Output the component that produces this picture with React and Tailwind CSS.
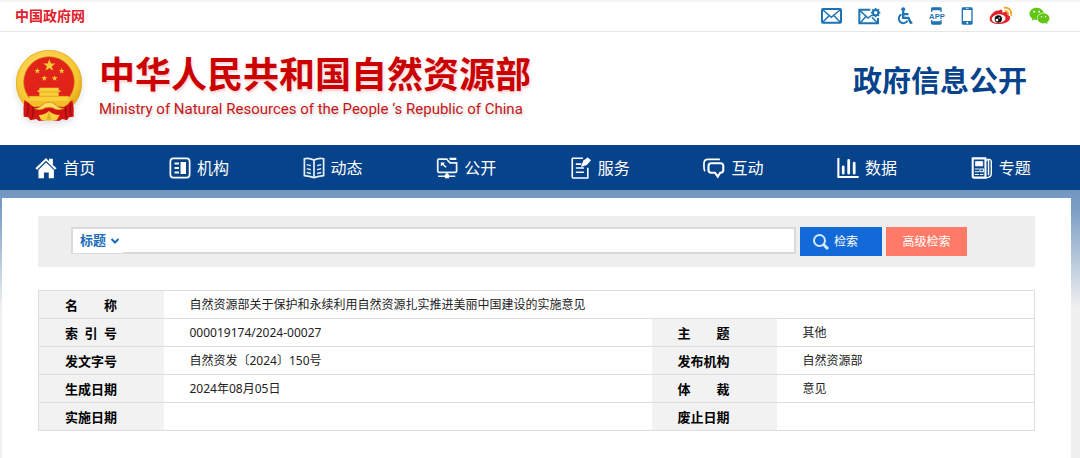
import { FaWeixin } from "react-icons/fa";

function Emblem() {
  return (
    <svg viewBox="45 147 216 228" className="mb-1 h-[76px] w-[72px] shrink-0 drop-shadow-md" role="img" aria-label="国徽">
      <defs>
        <radialGradient id="gold" cx="42%" cy="35%" r="70%">
          <stop offset="0" stopColor="#ffe070" />
          <stop offset="0.75" stopColor="#f6c32c" />
          <stop offset="1" stopColor="#d99a12" />
        </radialGradient>
      </defs>
      <circle cx="147" cy="249" r="99" fill="url(#gold)" />
      <circle cx="147" cy="249" r="98" fill="none" stroke="#dba51f" strokeWidth="2" />
      <circle cx="147" cy="246" r="76" fill="#e2231a" stroke="#c98a12" strokeWidth="2" />
      <path d="M73 300q-4 24-2 50l14 2 6 9 18-4 8 6 30-4 30 4 10-6 14 4 6-9 14-2q2-28-4-50l-22 16-48 8-50-8z" fill="#d21414" />
      <path d="M83 310q4 20-2 36M98 320q4 18-2 34M212 310q-4 20 2 36M198 320q-4 18 2 34" stroke="#9d0c0c" strokeWidth="4" fill="none" />
      <path d="M88 303v-15h30v-12h-5v-5h5v-8h58v8h5v5h-5v12h30v15z" fill="#f9cf3a" />
      <path d="M118 276h58M89 289h116" stroke="#d99a12" strokeWidth="2" />
      <path d="M84 303h127q-8 14-20 18l-21-2q-6-11-23-11t-23 11l-22 2q-12-6-18-18z" fill="#f2bd28" />
      <path d="M104 326q17-2 24-12 9-7 19-7t19 7q8 10 25 12-14 6-26 1-8-6-18-6t-18 6q-11 5-25-1z" fill="#ffdf62" stroke="#cf9113" strokeWidth="2" />
      <path d="M116 345q18 0 31-12 13 12 32 12l-8 14-24 3-24-3z" fill="#f9cf3a" />
      <path d="M147 333l-8 28h16z" fill="#cf9113" opacity=".5" />
      <g fill="#f2cf35">
        <path id="star" d="M148 177l4.500 13.500h14l-11.300 8.500 4.300 13.500-11.500-8.300-11.500 8.300 4.300-13.500-11.300-8.500h14z" />
        <use href="#star" transform="translate(112 213) scale(.48) translate(-148 -197)" />
        <use href="#star" transform="translate(185 213) scale(.48) translate(-148 -197)" />
        <use href="#star" transform="translate(133 235) scale(.48) translate(-148 -197)" />
        <use href="#star" transform="translate(164 235) scale(.48) translate(-148 -197)" />
      </g>
    </svg>
  );
}

const MailIcon = () => (
  <svg viewBox="61 25 63 48" className="h-4 w-[21px]" fill="none" stroke="#1e73b4" strokeWidth="6">
    <rect x="64" y="28" width="57" height="41" rx="3" />
    <path d="M67 31l25 22 26-22M67 67l18-19M118 67l-18-19" strokeWidth="4.500" />
  </svg>
);

const MailGearIcon = () => (
  <svg viewBox="172 20 69 54" className="h-[18px] w-[23px]" fill="none" stroke="#1e73b4" strokeWidth="6">
    <path d="M209 28h-33v41h56V53" />
    <path d="M178 31l24 22 12-9M179 67l16-18M230 67l-16-16" strokeWidth="4.500" />
    <circle cx="225" cy="37" r="8" strokeWidth="6" />
    <path d="M225 23v6M225 45v6M211 37h6M233 37h6M215 27l5 5M230 42l5 5M235 27l-5 5M220 42l-5 5" strokeWidth="5" />
  </svg>
);

const WheelchairIcon = () => (
  <svg viewBox="286 19 49 54" className="h-[18px] w-4" fill="none" stroke="#1e73b4" strokeWidth="5">
    <circle cx="305" cy="25" r="6" fill="#1e73b4" stroke="none" />
    <path d="M305 31v21h16l7 15 5-2M305 40h16" strokeWidth="7" />
    <path d="M300 41a14 14 0 1 0 18 19" strokeWidth="6" />
  </svg>
);

const AppIcon = () => (
  <svg viewBox="386 19 48 54" className="h-[18px] w-4" fill="#1e73b4">
    <path d="M392 34V24q0-4 4-4h24q4 0 4 4v10h-4v-5h-24v5zM392 58v10q0 4 4 4h24q4 0 4-4V58h-4v4h-24v-4z" />
    <text x="410" y="54" textAnchor="middle" fontSize="23" fontWeight="700" fontFamily="Liberation Sans, sans-serif">APP</text>
  </svg>
);

const PhoneIcon = () => (
  <svg viewBox="484 19 36 54" className="h-[18px] w-3">
    <rect x="486" y="20" width="33" height="52" rx="4" fill="#1e73b4" />
    <path d="M490 28h25v33h-25z" fill="#fff" />
    <path d="M498 24h9" stroke="#fff" strokeWidth="2" />
    <circle cx="503" cy="66" r="3" fill="#fff" />
  </svg>
);

const WeiboIcon = () => (
  <svg viewBox="568 18 72 57" className="h-[19px] w-6">
    <path d="M596 32c8-5 14-3 12 6 9-4 18-2 16 7 8 2 9 9 5 15-11 16-59 17-59-3 0-11 16-27 26-25z" fill="#e51f28" />
    <ellipse cx="597" cy="56" rx="21" ry="13" fill="#fff" transform="rotate(-7 597 56)" />
    <circle cx="596" cy="57" r="11" fill="#151515" />
    <circle cx="592" cy="60" r="4" fill="#fff" />
    <circle cx="599" cy="54" r="2" fill="#fff" />
    <path d="M613 23q23-2 22 24M615 33q11-1 11 11" fill="none" stroke="#f7a11b" strokeWidth="5" />
  </svg>
);

const navIconClass = "h-[22px] w-[22px] shrink-0";

const HomeIcon = () => (
  <svg viewBox="106 48 64 64" className={navIconClass} fill="#fff">
    <path d="M107 81l31-30 9 9v-7h11v18l11 10-5 4-26-26-26 26z" />
    <path d="M116 86l22-22 23 22v24h-15V93h-14v17h-16z" />
  </svg>
);

const OrgIcon = () => (
  <svg viewBox="508 49 64 64" className={navIconClass} fill="none" stroke="#fff" strokeWidth="5">
    <rect x="512" y="53" width="56" height="56" rx="9" />
    <path d="M524 68h13M524 81h13M524 94h13" strokeWidth="6" />
    <path d="M544 66h11v30h-11z" fill="#fff" />
  </svg>
);

const BookIcon = () => (
  <svg viewBox="99 49 64 64" className={navIconClass} fill="none" stroke="#e4eef9" strokeWidth="5">
    <path d="M131 58q-14-7-28-4v49q15 1 28 6 14-5 28-6V54q-15-3-28 4zM131 58v50" />
    <path d="M110 71l12 3M110 83l12 3M110 94l12 3M140 74l12-3M140 86l12-3M140 97l12-3" strokeWidth="4" />
  </svg>
);

const ScreenIcon = () => (
  <svg viewBox="499 49 64 64" className={navIconClass} fill="none" stroke="#eef4fb" strokeWidth="5">
    <path d="M536 62l-6-7h-22q-4 0-4 4v31q0 4 4 4h47q4 0 4-4V66h-19z" />
    <path d="M537 51h21v7h-18z" fill="#fff" stroke="none" />
    <path d="M513 65h12l-4 4 9 8-3 3-9-8-5 4z" fill="#fff" stroke="none" />
    <path d="M531 94v7M505 105h50" />
    <rect x="525" y="99" width="12" height="12" fill="#fff" stroke="none" />
  </svg>
);

const ServiceIcon = () => (
  <svg viewBox="88 49 64 68" className={navIconClass} fill="none" stroke="#fff" strokeWidth="5">
    <path d="M126 53H94q-1 0-1 2v56q0 3 3 3h45V82" />
    <path d="M104 71h17M104 83h25M104 96h25" />
    <path d="M120 80l7-20 10-6 3-4 11 9-4 5-9 10z" fill="#fff" stroke="none" />
  </svg>
);

const ChatIcon = () => (
  <svg viewBox="490 49 64 64" className={navIconClass} fill="none" stroke="#fff" strokeWidth="5">
    <path d="M496 90q-4-3-3-24 1-10 11-10h35" />
    <path d="M514 67h27q8 0 8 8v12q0 8-8 8h-1l-7 11-8-11h-11q-8 0-8-8V75q0-8 8-8z" strokeWidth="6" />
  </svg>
);

const ChartIcon = () => (
  <svg viewBox="80 49 64 64" className={navIconClass} fill="none" stroke="#fff">
    <path d="M84 52v55h59" strokeWidth="6" />
    <path d="M98 78v18M114 59v37M130 67v29" strokeLinecap="round" strokeWidth="8" />
  </svg>
);

const NewsIcon = () => (
  <svg viewBox="483 49 62 64" className={navIconClass} fill="none" stroke="#fff" strokeWidth="6">
    <path d="M487 53h37v56h-34q-3 0-3-3z" />
    <path d="M495 62h21v13h-21z" fill="#fff" strokeWidth="2" />
    <path d="M493 84h12M493 92h12M493 100h12M508 84h10v8h-10zM508 100h10" strokeWidth="3" />
    <path d="M524 61l6-5h6q5 1 5 6v36q0 10-12 11h-6M533 58v44" strokeWidth="4" />
  </svg>
);

const navItems = [
  ["首页", HomeIcon],
  ["机构", OrgIcon],
  ["动态", BookIcon],
  ["公开", ScreenIcon],
  ["服务", ServiceIcon],
  ["互动", ChatIcon],
  ["数据", ChartIcon],
  ["专题", NewsIcon],
];

const topLinks = [
  ["邮箱", MailIcon],
  ["邮箱设置", MailGearIcon],
  ["无障碍", WheelchairIcon],
  ["客户端", AppIcon],
  ["手机版", PhoneIcon],
  ["微博", WeiboIcon],
];

const rows = [
  ["索\u2002引\u2002号", "000019174/2024-00027", "主\u3000\u3000题", "其他"],
  ["发文字号", "自然资发〔2024〕150号", "发布机构", "自然资源部"],
  ["生成日期", "2024年08月05日", "体\u3000\u3000裁", "意见"],
  ["实施日期", "", "废止日期", ""],
];

const thClass = "bg-[#f2f2f2] py-0 pl-[26px] text-left text-[13px] font-bold text-black whitespace-nowrap";
const tdClass = "py-0 pl-[26px] text-left text-xs text-[#222]";
const rowClass = "h-7 border-b border-[#dedede]";

export default function App() {
  return (
    <div className="min-h-screen bg-[#f0f0f0] font-['Noto_Sans','Noto_Sans_CJK_SC',sans-serif]">
      <div className="flex h-8 items-center justify-between border-t-2 border-b border-t-[#f5f5f5] border-b-[#e6e6e6] bg-white pr-[30px] pb-0.5 pl-[15px]">
        <a href="#gov" className="text-sm leading-5 font-bold text-[#e0202c]">中国政府网</a>
        <div className="flex items-center gap-4">
          {topLinks.map(([label, Icon]) => (
            <a key={label} href="#link" aria-label={label}>
              <Icon />
            </a>
          ))}
          <a href="#wechat" aria-label="微信">
            <FaWeixin className="h-5 w-[21px] text-[#62c614]" />
          </a>
        </div>
      </div>

      <header className="flex h-[113px] items-center justify-between bg-white pr-[53px] pl-[15px]">
        <div className="flex items-center gap-3">
          <Emblem />
          <div className="pb-1">
            <h1 className="text-4xl leading-[44px] font-bold text-[#cb0000] [text-shadow:1px_2px_3px_rgba(203,0,0,0.2)]">
              中华人民共和国自然资源部
            </h1>
            <p className="font-[Roboto,sans-serif] text-[15px] leading-6 text-[#cb1414] [text-shadow:1px_2px_3px_rgba(0,0,0,0.2)]">
              Ministry of Natural Resources of the People ‘s Republic of China
            </p>
          </div>
        </div>
        <h2 className="pb-4 text-[29px] leading-9 font-bold text-[#07438a]">政府信息公开</h2>
      </header>

      <nav className="grid h-[45px] grid-cols-8 bg-[#07438a] pr-[11px]">
        {navItems.map(([label, Icon]) => (
          <a key={label} href="#nav" className="flex items-center justify-center gap-1.5 pr-[3px] text-base text-white">
            <Icon />
            {label}
          </a>
        ))}
      </nav>

      <div className="bg-[linear-gradient(to_bottom,#7196c0_0px,#7c9fc5_20px,#f0f0f0_118px)] pt-2 pr-[9px] pl-0.5">
        <main className="min-h-[260px] bg-white px-9 pt-[18px] pb-[26px]">
          <form className="flex h-[51px] items-start gap-1 bg-[#eeeeee] pt-[11px] pr-[68px] pl-[33px]">
            <div className="flex h-[27px] flex-1 border-2 border-[#dadada] bg-white">
              <div className="z-10 -mb-px flex w-[50px] items-center bg-white pl-[7px]">
                <select aria-label="检索字段" className="w-[27px] appearance-none text-[13px] font-bold text-[#1a6cb8] outline-none">
                  <option>标题</option>
                </select>
                <svg viewBox="0 0 10 8" className="ml-[3px] h-2 w-2.5 shrink-0" fill="none" stroke="#1a6cb8" strokeWidth="2">
                  <path d="M1.500 2l3.500 3.500 3.500-3.500" />
                </svg>
              </div>
              <input type="text" aria-label="检索词" className="min-w-0 flex-1 px-1 text-xs outline-none" />
            </div>
            <button type="button" className="flex h-[29px] w-[82px] items-center gap-1 bg-[#126ad8] pl-3 text-xs text-white">
              <svg viewBox="0 0 18 18" className="h-[18px] w-[18px]" fill="none" stroke="#d6e9ff" strokeWidth="2">
                <circle cx="7.500" cy="7.500" r="5.500" />
                <path d="M11.500 11.500l4.500 4.500" strokeWidth="3" />
              </svg>
              检索
            </button>
            <button type="button" className="h-[29px] w-[81px] bg-[#ff7b68] text-xs text-white">高级检索</button>
          </form>

          <table className="mt-[23px] w-full table-fixed border-collapse border border-[#dedede] leading-5">
            <colgroup>
              <col className="w-[125px]" />
              <col className="w-[49%]" />
              <col className="w-[125px]" />
              <col />
            </colgroup>
            <tbody>
              <tr className={rowClass}>
                <th scope="row" className={thClass}>{"名\u3000\u3000称"}</th>
                <td colSpan={3} className={tdClass}>自然资源部关于保护和永续利用自然资源扎实推进美丽中国建设的实施意见</td>
              </tr>
              {rows.map(([a, b, c, d]) => (
                <tr key={a} className={rowClass}>
                  <th scope="row" className={thClass}>{a}</th>
                  <td className={tdClass}>{b}</td>
                  <th scope="row" className={thClass}>{c}</th>
                  <td className={tdClass}>{d}</td>
                </tr>
              ))}
            </tbody>
          </table>
        </main>
      </div>
    </div>
  );
}
